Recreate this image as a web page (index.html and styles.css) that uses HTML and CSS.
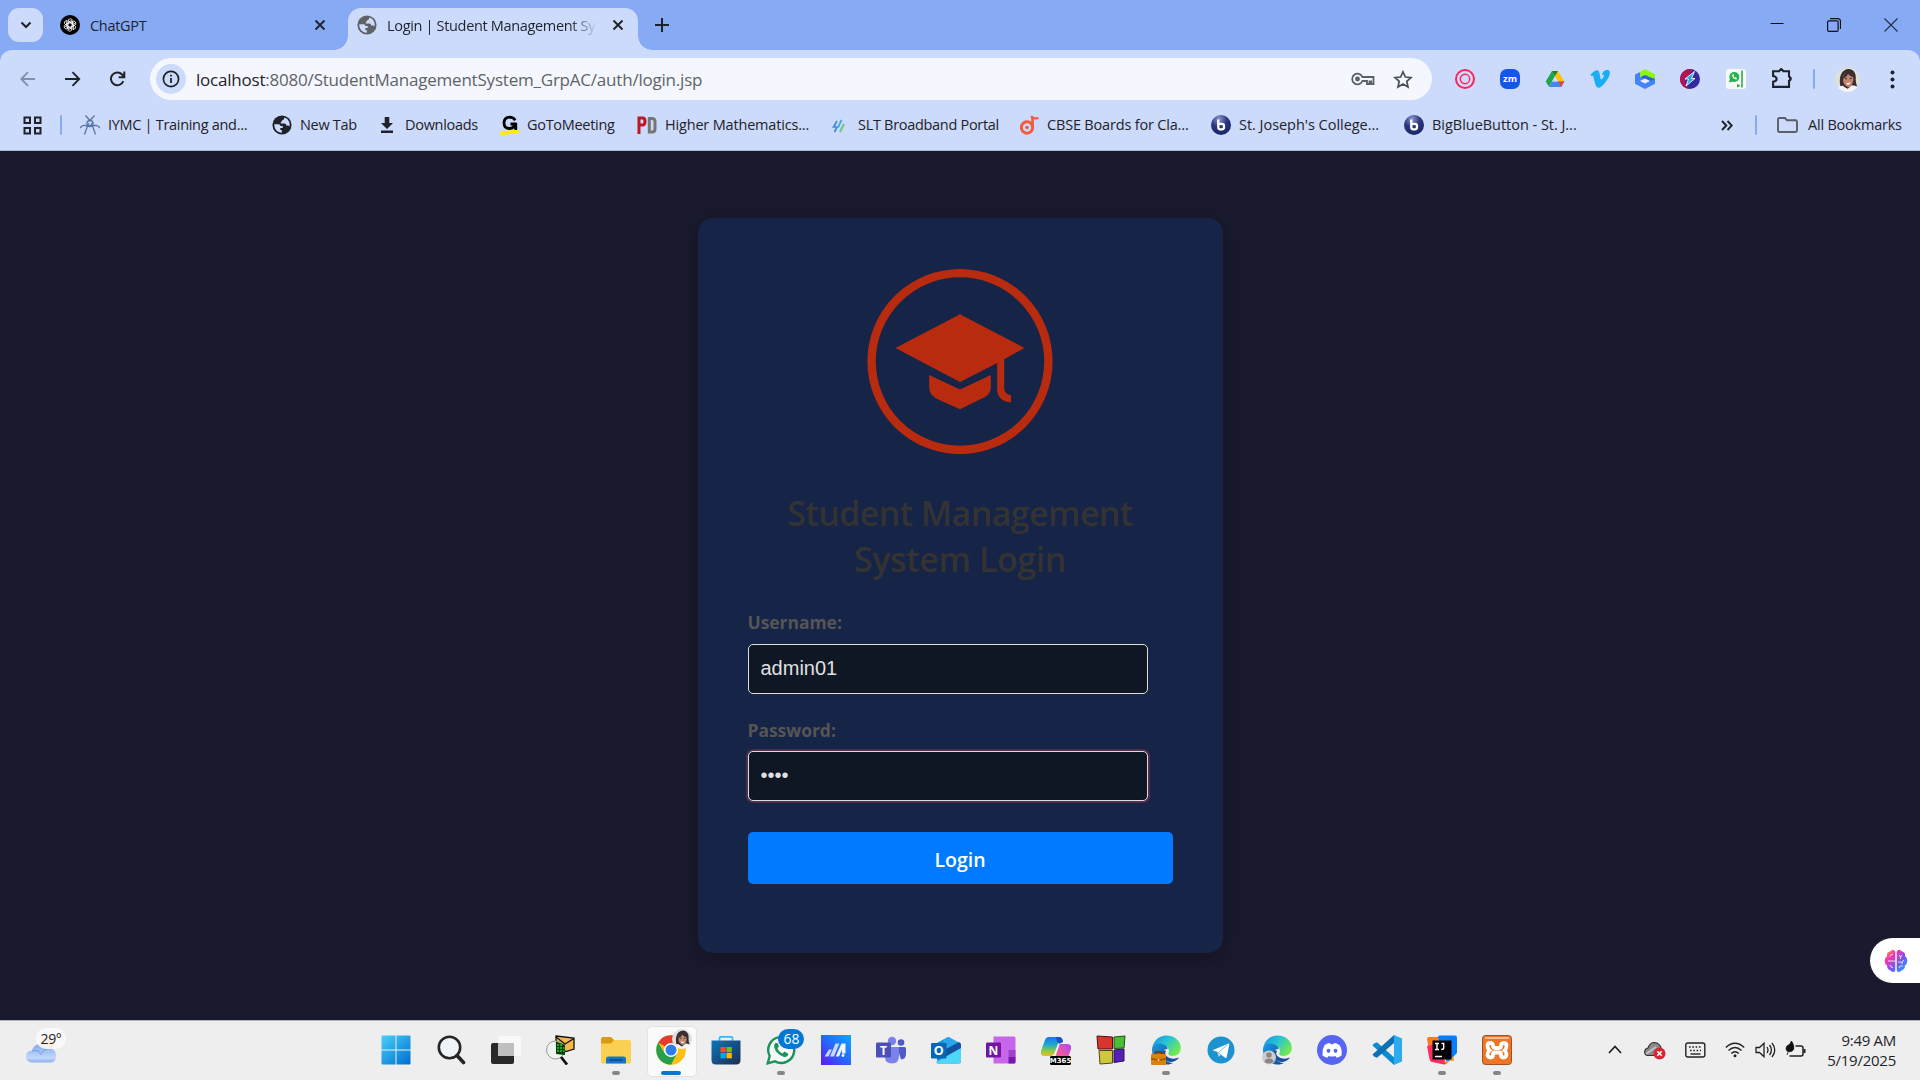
FILE: index.html
```html
<!DOCTYPE html>
<html lang="en">
<head>
<meta charset="utf-8">
<title>Login | Student Management System</title>
<link rel="stylesheet" href="styles.css">
</head>
<body>
<svg class="defs" width="0" height="0" aria-hidden="true">
  <defs>
    <linearGradient id="edgeA" x1="0" y1="0" x2="1" y2="0.6"><stop offset="0" stop-color="#1d8de0"/><stop offset=".5" stop-color="#27c3d6"/><stop offset="1" stop-color="#74ea4c"/></linearGradient>
    <linearGradient id="edgeB" x1="0" y1="0" x2="1" y2="1"><stop offset="0" stop-color="#1a9be8"/><stop offset="1" stop-color="#0b4a94"/></linearGradient>
    <radialGradient id="ball" cx=".4" cy=".2" r=".8"><stop offset="0" stop-color="#8e98cc"/><stop offset=".5" stop-color="#2b3780"/><stop offset="1" stop-color="#1b2564"/></radialGradient>
    <symbol id="globe" viewBox="0 0 20 20"><circle cx="10" cy="10" r="9.600" fill="currentColor"/><path d="M2.300 9.200h4.200c1.300 0 1.900.8 1.900 1.900h2.300v2H8.300v1.800h1.500v2.800C5.500 17.500 2 13.800 2.300 9.200z" fill="#ccdafb"/><path d="M12.200 2.500c.3 1.200-.2 2.300-1.600 2.500-.9.200-.5 2-1.800 2v1.600h3.600c1.300 0 1.800.9 1.800 1.900h1.500c.9 0 1.500.4 1.800 1 1-3.900-1.300-7.900-5.300-9z" fill="#ccdafb"/></symbol>
    <symbol id="x" viewBox="0 0 12 12"><path d="M1.500 1.500l9 9M10.500 1.500l-9 9" stroke="#1f2329" stroke-width="1.900"/></symbol>
    <symbol id="bbb" viewBox="0 0 20 20"><circle cx="10" cy="10" r="10" fill="url(#ball)"/><path d="M7.300 4.500v7.800q0 2 2 2h1.700q2 0 2-2v-1.500q0-2-2-2H7.500" fill="none" stroke="#fff" stroke-width="2.300"/></symbol>
    <symbol id="face" viewBox="0 0 26 26"><clipPath id="disc"><circle cx="13" cy="13" r="13"/></clipPath><g clip-path="url(#disc)"><path d="M0 0h26v26H0z" fill="#dbe2dc"/><path d="M6.500 22C4 16 4 3 14 2c6 0 8.500 6 7.500 11q0 4 1.500 7l-6 3z" fill="#3b2c30"/><path d="M8.500 9q3-4 8-2.500Q19.500 9 19 14q-1 6-5 7-4-1-5.500-6z" fill="#c0866e"/><path d="M8 12q1-5 6-7 4 1 5.500 6-4-1-6-4-1.500 4-5.500 5z" fill="#3b2c30"/><path d="M1 26q1-6 7-6.500l5 3.500 4.500-4Q25 19 26 26z" fill="#f8f2f3"/><path d="M11.500 16q2.500 1.500 4.500-.5-.7 3-2.300 3-1.500 0-2.200-2.500z" fill="#fff"/><path d="M10.300 12.200h2.200M15.200 12h2.200" stroke="#3b2c30"/></g></symbol>
    <symbol id="edge" viewBox="0 0 30 30"><path d="M1 16C1 7 7 .5 15.500.5 24 .5 29.800 6 29.800 13c0 5-4 8-8 8-3 0-5-1-4.500-2.500C19 16 17.500 11 12 9.500 6 8.200 2 11 1 16z" fill="url(#edgeA)"/><path d="M1 15C1.500 10 6 7.500 11 8.800c4 1 6 3.500 5.500 5.200C12 14 10.500 19 13 23c2 3.500 5 5 9 5-3 2-10 2.500-15-1.500C3 23.500.8 20 1 15z" fill="url(#edgeB)"/><path d="M11.500 17c-1 6 4 10.500 9 10 3-.3 6-2 7.500-4.500-4 2-10 1.500-13-2-1-1.300-1.200-3 0-4.500-1.500-.8-3-.5-3.500 1z" fill="#14509b"/></symbol>
  </defs>
</svg>

<div class="screen">
  <header class="browser">
    <div class="tabstrip">
      <button class="tab-search"><svg width="12" height="8" viewBox="0 0 12 8"><path d="M1.500 1.500L6 6l4.500-4.500" fill="none" stroke="#1f2329" stroke-width="2"/></svg></button>
      <div class="tab">
        <svg class="favicon" viewBox="0 0 20 20"><circle cx="10" cy="10" r="10" fill="#000"/><g fill="none" stroke="#fff" stroke-width=".8"><path id="petal" d="M8 9V6.300q0-2.300 2.100-2.500 1.300 0 2.300 1L8 7.300M12 11V8L7.800 5.700"/><use href="#petal" transform="rotate(60 10 10)"/><use href="#petal" transform="rotate(120 10 10)"/><use href="#petal" transform="rotate(180 10 10)"/><use href="#petal" transform="rotate(240 10 10)"/><use href="#petal" transform="rotate(300 10 10)"/></g></svg>
        <span class="tab-title">ChatGPT</span>
        <svg class="tab-close"><use href="#x"/></svg>
      </div>
      <div class="tab active">
        <svg class="favicon grey"><use href="#globe"/></svg>
        <span class="tab-title fade">Login | Student Management Sy</span>
        <svg class="tab-close"><use href="#x"/></svg>
      </div>
      <svg class="new-tab" width="14" height="14" viewBox="0 0 14 14"><path d="M7 0v14M0 7h14" stroke="#1f2329" stroke-width="2"/></svg>
      <div class="window-buttons">
        <svg width="14" height="14" viewBox="0 0 14 14"><path d="M.5 5.500h13" stroke="#111"/></svg>
        <svg width="14" height="14" viewBox="0 0 14 14" fill="none" stroke="#111"><rect x=".6" y="2.900" width="10.500" height="10.500" rx="1.200" stroke-width="1.200"/><path d="M3 .6h7.500q3 0 3 3V11" stroke-width="1.200"/></svg>
        <svg width="14" height="14" viewBox="0 0 14 14"><path d="M.5.5l13 13M13.500.5l-13 13" stroke="#222d45" stroke-width="1.100"/></svg>
      </div>
    </div>

    <div class="toolbar">
      <div class="nav">
        <svg width="16" height="16" viewBox="0 0 16 16" fill="none" stroke="#8390ad" stroke-width="1.900"><path d="M15 8H1M8 1.200L1.300 8 8 14.800"/></svg>
        <svg width="16" height="16" viewBox="0 0 16 16" fill="none" stroke="#1f2329" stroke-width="1.900"><path d="M0 8h14M7.500 1.200L14.200 8 7.500 14.800"/></svg>
        <svg width="16" height="16" viewBox="0.5 0 16 16" fill="none" stroke="#1f2329" stroke-width="2"><path d="M13.800 10.200A6.400 6.400 0 1 1 12.600 3.500L14.400 5.600M14.800.6v5.600H9.200"/></svg>
      </div>
      <div class="omnibox">
        <span class="site-info"><svg width="18" height="18" viewBox="0 0 18 18"><circle cx="9" cy="9" r="7.600" fill="none" stroke="#1f2329" stroke-width="1.700"/><path d="M9 8v5M9 4.800v1.800" stroke="#1f2329" stroke-width="1.800"/></svg></span>
        <span class="url">localhost<span class="path">:8080/StudentManagementSystem_GrpAC/auth/login.jsp</span></span>
        <svg class="key" width="24" height="14" viewBox="0 0 24 14" fill="none" stroke="#5b5f66" stroke-width="1.800"><path d="M11.400 5A5.300 5.300 0 1 0 11.400 9H16v3h2.500V9.500h1.700V12H22.500V5z"/><circle cx="6.500" cy="7" r="2.400" fill="#5b5f66" stroke="none"/></svg>
        <svg class="star" width="20" height="19" viewBox="0 0 20 19"><path d="M10 1.800l2.400 5.200 5.600.6-4.200 3.800 1.200 5.600L10 14.100 5 17l1.200-5.600L2 7.600 7.600 7z" fill="none" stroke="#4a4e55" stroke-width="1.700"/></svg>
      </div>
      <div class="extensions">
        <svg viewBox="0 0 20 20" fill="none" stroke="#ff2358"><circle cx="10" cy="10" r="9" stroke-width="2"/><circle cx="10" cy="10" r="4.700" stroke-width="1.400"/></svg>
        <svg viewBox="0 0 20 20"><rect width="20" height="20" rx="7" fill="#1257e8"/><text x="10" y="13" class="zm">zm</text></svg>
        <svg viewBox="0 0 20 20"><path d="M7 2h6L7 12.500 4 17.700.7 12.500z" fill="#20a452"/><path d="M7 2h6l6.300 10.500h-6.200z" fill="#ffc107"/><path d="M7 12.500h12.300L16.200 18H4z" fill="#4285f4"/><path d="M13 12.500h6.300L16.200 18z" fill="#ea4335"/><path d="M7 2h6l-3 5z" fill="#188038"/><path d="M10 7.500l2.800 5H7.100z" fill="#ccdafb"/></svg>
        <svg viewBox="0 0 20 20"><path d="M.5 5.500C3 3.300 5 1.500 6.500 1.300c2-.3 2.800 1.400 3.200 4 .5 3 .9 5.300 1.600 5.300.6 0 2-2 2.500-3.300.5-1.500-.6-2-1.900-1.400C12.600 2.500 15 .8 17.400 1c2 .1 2.600 1.600 2.400 3.800-.4 4-6 11.600-9.600 13.600-2.300 1.200-4.200-.3-5-3.300L3.500 8.200C3 6.400 2.400 6.500 1.500 7.200z" fill="#19aef4"/></svg>
        <svg viewBox="0 0 20 20"><path d="M5 3l5-3 10 5.200v5L10 6 5 8.500z" fill="#8bf80a"/><path d="M0 5.500L5 3v5.500L15 10l5-.5v5.300L10 20 0 14.800z" fill="#4285f8"/><path d="M5 8.300L10 6l10 4.300-5 1.700z" fill="#2865d0"/><path d="M5 12l5-2.500L15 12l-5 2.600z" fill="#e9f1ff"/></svg>
        <svg viewBox="0 0 20 20"><circle cx="10" cy="10" r="10" fill="#3428a4"/><path d="M13 .5A10 10 0 1 0 9 20L5 13z" fill="#b11455"/><path d="M14.500 2.500L5 10h3.500l-2.500 7L15 9.500h-3.500z" fill="#25a6ea" stroke="#fff" stroke-width=".9"/></svg>
        <svg viewBox="0 0 20 20"><rect width="20" height="20" rx="3" fill="#f7f8f8"/><circle cx="8.300" cy="8" r="5" fill="#24b34c"/><path d="M3 13.500l1-4 3 3z" fill="#24b34c"/><path d="M6 6q.5 4 4.500 4.500l.5-1.200-1.500-1-1 .5L7.500 7l.5-1-.8-1z" fill="#fff"/><path d="M16 1.500v17" stroke="#24a345" stroke-width="1.500"/><path d="M11 15l3.500 1.800L11 18.500z" fill="#24a345"/></svg>
        <svg class="puzzle" viewBox="0 0 21 21"><path d="M2 4h5.800a2.100 2.100 0 0 1 3.900 0H17.200v5a2.200 2.200 0 0 1 0 4.200V19H2v-5q3.400-.4 3.400-2.600T2 8.600z" fill="none" stroke="#1f2329" stroke-width="2"/><path d="M8 3.500q1.800-4 3.500 0M17.500 9q3.500 2 0 4" fill="#1f2329" stroke="#1f2329"/></svg>
      </div>
      <i class="divider"></i>
      <svg class="avatar"><use href="#face"/></svg>
      <svg class="menu" width="5" height="19" viewBox="0 0 5 19" fill="#1f2329"><circle cx="2.500" cy="2.500" r="2"/><circle cx="2.500" cy="9.500" r="2"/><circle cx="2.500" cy="16.500" r="2"/></svg>
    </div>

    <nav class="bookmarks">
      <svg class="apps" width="19" height="19" viewBox="0 0 19 19" fill="none" stroke="#1f2329" stroke-width="2"><path d="M1.500 1.500H7V7H1.500zM12 1.500h5.500V7H12zM1.500 12H7v5.500H1.500zM12 12h5.500v5.500H12z"/></svg>
      <i class="divider"></i>
      <div class="bookmark-list">
        <a><svg viewBox="0 0 20 20" fill="none" stroke="#5576a8" stroke-width="1.300"><path d="M5.500.5L10 5.500l4.500-5M8.500 8L4.500 19.500M11.500 8l4 11.500M0 13q2.500-3 5-2.500h10q2.500-.5 5 2.500"/><circle cx="10" cy="8.500" r="3"/></svg><span>IYMC | Training and...</span></a>
        <a><svg class="dark"><use href="#globe"/></svg><span>New Tab</span></a>
        <a><svg viewBox="0 0 20 20"><path d="M7.700 2h4.600v6H16l-6 6-6-6h3.700zM4 15.500h12V18H4z" fill="#1f2329"/></svg><span>Downloads</span></a>
        <a><svg viewBox="0 0 20 20"><path d="M1 16l19-1v3.500L1.500 20z" fill="#ffed00"/><path d="M16.200 5.200Q14.200 2.200 10.700 2.200 5 2.500 5 8t5.500 5.500Q15.500 13 16 9h-4.500M16.800 8v7" fill="none" stroke="#000" stroke-width="2.800"/></svg><span>GoToMeeting</span></a>
        <a class="looser"><svg viewBox="0 0 20 20" fill="none"><path d="M2 19V3h3.500Q8 3 8 6.500T5.500 10H2" stroke="#bd1722" stroke-width="3"/><path d="M12.300 3.500H15q3 0 3 3v7.500q0 3-3 3h-2.700z" stroke="#757575" stroke-width="3"/></svg><span>Higher Mathematics...</span></a>
        <a><svg viewBox="0 0 20 20" fill="none"><path d="M7 6l-3.500 6H7l-2.500 5" stroke="#3c8ed0" stroke-width="1.700"/><path d="M11.500 5L8 12.500" stroke="#4ba8da" stroke-width="1.800"/><path d="M14 9l-4 8" stroke="#72c47e" stroke-width="2"/><path d="M16 3l-1 2M3 16l-2 2M18 12l-1 2" stroke="#bfe8f8" stroke-width="1.200"/></svg><span>SLT Broadband Portal</span></a>
        <a class="looser"><svg viewBox="0 0 20 20" fill="none" stroke="#f25c3a"><circle cx="8" cy="12.500" r="5.700" stroke-width="3"/><path d="M13.500 14V2" stroke-width="2.700"/><path d="M12.200 1q2 3.500 7.300 2" stroke-width="2.300"/><circle cx="8" cy="12.500" r="1.800" fill="#f25c3a" stroke="none"/></svg><span>CBSE Boards for Cla...</span></a>
        <a class="loosest"><svg><use href="#bbb"/></svg><span>St. Joseph's College...</span></a>
        <a class="loosest"><svg><use href="#bbb"/></svg><span>BigBlueButton - St. J...</span></a>
      </div>
      <svg class="more" width="12" height="11" viewBox="0 0 12 11" fill="none" stroke="#1f2329" stroke-width="1.900"><path d="M1 1l4.300 4.500L1 10M6.500 1l4.300 4.500L6.500 10"/></svg>
      <i class="divider"></i>
      <svg class="folder" width="21" height="16" viewBox="0 0 21 16"><path d="M1 2.500Q1 1 2.500 1H8l2 2.200h8.500q1.500 0 1.500 1.500v8.800q0 1.500-1.500 1.500h-16Q1 15 1 13.500z" fill="none" stroke="#5b5f66" stroke-width="1.900"/></svg>
      <span class="all">All Bookmarks</span>
    </nav>
  </header>

  <main class="page">
    <form class="card">
      <svg class="logo" width="186" height="186" viewBox="867 268 186 186" fill="#b92b0e">
        <circle cx="960" cy="361.500" r="88.400" fill="none" stroke="#b92b0e" stroke-width="8.400"/>
        <path d="M960 314.200L1024.500 348 1004.200 359.200V388Q1004.500 394.500 1011 395.200V402.300Q998 401.500 997.200 390V363L960 382 895.500 348z"/>
        <path d="M929.200 375L960 389.500 990.800 375V388Q990.500 393.500 985 397L960 409.200 936.500 398.800Q929.200 394.500 929.200 387z"/>
      </svg>
      <h2>Student Management<br><span class="second">System Login</span></h2>
      <label for="username">Username:</label>
      <input id="username" type="text" value="admin01">
      <label for="password">Password:</label>
      <input id="password" class="focused" type="password" value="1234">
      <button type="button" class="login"><span>Login</span></button>
    </form>
    <aside class="assistant"><svg width="24" height="24" viewBox="0 0 24 24"><defs><linearGradient id="brain" x1="0" y1="0" x2="1" y2="1"><stop offset="0" stop-color="#ffb020"/><stop offset=".3" stop-color="#f036b4"/><stop offset=".6" stop-color="#7358f0"/><stop offset="1" stop-color="#18b5f4"/></linearGradient></defs><path d="M11.300 2.500Q9-.8 6 2.500 2.500 3 3 7 .2 9 .8 12.500 1 15.500 3 16.500q0 4 3.500 5 3 3 4.800 0zM12.700 2.500Q15-.8 18 2.500 21.500 3 21 7q2.800 2 2.200 5.500-.2 3-2.200 4 0 4-3.500 5-3 3-4.800 0z" fill="url(#brain)"/><path d="M4 12h7M6 7.500Q7 5 9 5.500M6 16q1 3 3 2.500M15 6l1.500 2L18 6M16.500 8v2M14 13h4l2-2M18 13v2M15 19q0-2 2-2h2" fill="none" stroke="#fff" stroke-width=".8"/></svg></aside>
  </main>

  <footer class="taskbar">
    <div class="weather">
      <svg width="32" height="34" viewBox="0 0 32 34"><defs><linearGradient id="cloud" x1="0" y1="0" x2="0" y2="1"><stop offset="0" stop-color="#7fa9ed"/><stop offset=".75" stop-color="#c3d8f9"/><stop offset="1" stop-color="#8db0ee"/></linearGradient></defs><circle cx="22" cy="15" r="7" fill="#fb8a23"/><path d="M7 33.500Q1 33 1 27.500 1 22 7 21.500 9 15 15 15t8 4.500q8-.5 8 7t-6 7z" fill="url(#cloud)"/><path d="M7 22q7-2 9 4M17 24q2-4 6-4.500" fill="none" stroke="#7399dc"/></svg>
      <span class="temp">29°</span>
    </div>

    <div class="apps-row">
      <div><svg viewBox="0 0 30 30"><defs><linearGradient id="win" gradientUnits="userSpaceOnUse" x1="0" y1="0" x2="26" y2="30"><stop offset="0" stop-color="#4bd2fb"/><stop offset="1" stop-color="#0072d2"/></linearGradient></defs><path d="M.5 1.500q0-1 1-1H14.500V14.500H.5zM15.500.5h13q1 0 1 1v13h-14zM.5 15.500h14v14h-13q-1 0-1-1zM15.500 15.500h14v13q0 1-1 1h-13z" fill="url(#win)"/></svg></div>
      <div><svg viewBox="0 0 30 30" fill="none" stroke="#252525"><circle cx="13.500" cy="12.500" r="10.700" fill="#f1f4f6" stroke-width="2.600"/><path d="M21 20.500l6.500 7" stroke-width="3.600" stroke-linecap="round"/></svg></div>
      <div><svg viewBox="0 0 30 30"><rect x="0" y="8" width="23" height="21" rx="2" fill="#292929"/><path d="M7 2.500Q7 1 9 1h19q2 0 2 2v16q0 2-2 2H7z" fill="#f8f8f8"/><path d="M7 8h16v13H7z" fill="#bfbfbf"/></svg></div>
      <div><svg viewBox="0 0 30 30"><path d="M10 1l18 2v11l-8 2.500-10-5z" fill="#f0b94a" stroke="#111" stroke-width="1.300"/><path d="M10 2l9 7 9-5.500" fill="none" stroke="#111" stroke-width="1.300"/><circle cx="9.500" cy="15" r="9" fill="#eff3ef" fill-opacity=".85" stroke="#999"/><path d="M10 6.500l9 3.500v10l-9-1z" fill="#0a3b09"/><path d="M11 10h2m1 0h2m-5 3h2m1 0h2m1 0h1.500m-7.500 3h2m1 0h2m1 0h1.500" stroke="#1ed02d" stroke-width="1.500"/><path d="M15 22l6 7.500" stroke="#111" stroke-width="2.800"/></svg></div>
      <div class="running"><svg viewBox="0 0 30 30"><path d="M0 4q0-2 2-2h8l3 3v6H0z" fill="#d99b13"/><path d="M0 8.500h10L13 5h15q2 0 2 2v20q0 1.500-1.500 1.500h-27Q0 28.500 0 27z" fill="#fbd052"/><path d="M5 28v-4q0-2.500 2.500-2.500h15Q25 21.500 25 24v4.500H5z" fill="#1675c4"/><path d="M9 25h12" stroke="#0a4784" stroke-width="1.500" stroke-linecap="round"/></svg></div>
      <div class="running current"><svg viewBox="0 0 30 30"><circle cx="15" cy="15" r="14.800" fill="#fbc116"/><path d="M15 15L2.200 7.600A14.800 14.800 0 0 1 28 8z" fill="#e33b2e"/><path d="M2.200 7.600A14.800 14.800 0 0 0 15 29.800L21 18.500 8.500 18z" fill="#279e4b"/><path d="M15 8.300h12.800L28 8z" fill="#e33b2e"/><circle cx="15" cy="15" r="7" fill="#fff"/><circle cx="15" cy="15" r="5.500" fill="#2e7dee"/></svg><svg class="profile"><use href="#face"/></svg></div>
      <div><svg viewBox="0 0 30 30"><defs><linearGradient id="store" x1="0" y1="0" x2="1" y2="1"><stop offset="0" stop-color="#0c76b8"/><stop offset="1" stop-color="#1d2c52"/></linearGradient></defs><path d="M8.500 6V3q0-1.200 1.200-1.200h10.600q1.200 0 1.200 1.200v3" fill="none" stroke="#2fbdf0" stroke-width="1.700"/><path d="M.5 5.500h29V25q0 4.500-4.500 4.500H5Q.5 29.500.5 25z" fill="url(#store)"/><path d="M9.500 12h5.300v5.300H9.500z" fill="#f25022"/><path d="M15.500 12h5.300v5.300h-5.300z" fill="#7fba00"/><path d="M9.500 18h5.300v5.300H9.500z" fill="#00a4ef"/><path d="M15.500 18h5.300v5.300h-5.300z" fill="#ffb900"/></svg></div>
      <div class="running"><svg viewBox="0 0 30 30"><path d="M1.700 28.300l2-7.300A13 13 0 1 1 9 26.400z" fill="#f5f8f6" stroke="#19935a" stroke-width="2.400"/><path d="M9.500 8q-2 1.500-1.300 4.500 2.300 7 9.800 9.500 3.500.3 4.500-3l-4-2.500-2 2q-4-2-5-5.500l1.500-1.500L11.500 8z" fill="#19935a"/></svg><b class="badge">68</b></div>
      <div><svg viewBox="0 0 30 30"><defs><linearGradient id="asus" x1="0" y1="1" x2="1" y2="0"><stop offset="0" stop-color="#6018ee"/><stop offset=".5" stop-color="#2468ff"/><stop offset="1" stop-color="#08aaff"/></linearGradient></defs><path d="M0 0h30v30H0z" fill="url(#asus)"/><path d="M3.500 21.500L8 14.500h3L7.500 21.500zM9 21.500L14.500 8.500h3.800L13 21.500z" fill="#c9d8ff"/><path d="M14.800 21.500L20.500 8.500H24.500V18.500H21V14.500L18 21.500z" fill="#f0f5ff"/><circle cx="22" cy="20.500" r="1.400" fill="#fff"/></svg></div>
      <div><svg viewBox="0 0 30 30"><circle cx="16" cy="6" r="4.200" fill="#7b83eb"/><circle cx="25" cy="7.500" r="3.300" fill="#5059c9"/><path d="M21 12h7.500q1.500 0 1.500 1.500V19q0 5-5 5.500z" fill="#5059c9"/><path d="M9 12h14v9q0 7.500-7 7.500T9 22z" fill="#7b83eb"/><rect y="7.500" width="15" height="15" rx="1.200" fill="#4a50b5"/><text x="7.500" y="19.500" class="tile-letter t">T</text></svg></div>
      <div><svg viewBox="0 0 30 30"><path d="M4 9L17 2l13 7v17q0 2.500-2.500 2.500h-21z" fill="#1390df"/><path d="M12 5l6-3 12 7-13 8z" fill="#28a8ea"/><path d="M15 14L28 7l2 2v6l-16 9z" fill="#1054a0"/><path d="M5 27l25-14v13q0 2.500-2.500 2.500H8q-3 0-3-1.500z" fill="#4fd6f8"/><rect y="8" width="15.500" height="15.500" rx="1.200" fill="#0766b5"/><text x="7.700" y="20" class="tile-letter">O</text></svg></div>
      <div><svg viewBox="0 0 30 30"><path d="M7.500 1.500H28q1.500 0 1.500 1.500v24q0 1.500-1.500 1.500H7.500z" fill="#c766ea"/><path d="M22.500 15h7v7h-7z" fill="#9e42c8"/><path d="M22.500 22h7v5q0 1.500-1.500 1.500h-5.500z" fill="#7719aa"/><rect y="7.500" width="15" height="15" rx="1.200" fill="#7215a2"/><text x="7.500" y="19.500" class="tile-letter t">N</text></svg></div>
      <div><svg viewBox="0 0 30 30"><defs><linearGradient id="copA" x1="0" y1="0" x2="0" y2="1"><stop offset="0" stop-color="#1577ec"/><stop offset=".4" stop-color="#21a9cc"/><stop offset=".75" stop-color="#96cc3a"/><stop offset="1" stop-color="#f0b72b"/></linearGradient><linearGradient id="copB" x1="1" y1="0" x2="0" y2="1"><stop offset="0" stop-color="#a54af0"/><stop offset=".5" stop-color="#ef58a6"/><stop offset="1" stop-color="#ff8a4a"/></linearGradient></defs><path d="M8 2h10q3 0 4 4l-4 3-5 10q-2 3-5 2H3q-4 0-3-5L4 5q1-3 4-3z" fill="url(#copA)"/><path d="M18 9h8q5 0 4 5l-4 12q-1 2-4 2H10q2-1 3-4l4-13q.5-2 1-2z" fill="url(#copB)"/><path d="M15 2h3q3 0 4 5l-4 2q-3-3-3-7z" fill="#1753c7"/><path d="M18 8.500l-5 14" stroke="#f5f5f8" stroke-width="1.800"/><rect x="9" y="21" width="21" height="9" rx="1.500" fill="#000"/><text x="19.500" y="28.300" class="m365">M365</text></svg></div>
      <div><svg viewBox="0 0 30 30"><path d="M1 1l15.500 1V14H2z" fill="#d8352d" stroke="#4d1010"/><path d="M18 2L29 1l-1 12-10 .5z" fill="#4cbd34" stroke="#1f5017"/><path d="M3 15.500h13.500V28L4 29z" fill="#cfc83c" stroke="#4d4910"/><path d="M18 15l10-1v12l-10 1.500z" fill="#5420b4" stroke="#281056"/></svg></div>
      <div class="running"><svg viewBox="0 0 30 30"><use href="#edge" width="30" height="30"/><path d="M4.500 19v-2h6v2" fill="none" stroke="#6c3c06" stroke-width="1.300"/><rect y="19" width="15" height="11" rx="1" fill="#d9820e"/><path d="M0 23.500q7 3 15 0" fill="none" stroke="#9b5407" stroke-width="1.500"/><circle cx="7.500" cy="25" r="1" fill="#ffe86a"/></svg></div>
      <div><svg viewBox="0 0 30 30"><circle cx="15" cy="15" r="13.500" fill="#1c93cf"/><path d="M6.500 15.300L22.500 8.500q1-.2.800 1l-2.600 12.800q-.4 1-1.500.4L11 16.800z" fill="#fff"/><path d="M11.500 17l1 5 2.500-2.500" fill="#c8daea"/><path d="M12 18l9-8" stroke="#80b6d8"/></svg></div>
      <div><svg viewBox="0 0 30 30"><use href="#edge" width="30" height="30"/><circle cx="7" cy="22.500" r="7" fill="#cfcecd"/><circle cx="7" cy="20" r="2.800" fill="#8a8886"/><path d="M2.500 27q0-3.500 4.500-3.500t4.500 3.500q-4 3-9 0z" fill="#8a8886"/></svg></div>
      <div><svg viewBox="0 0 30 30"><circle cx="15" cy="15" r="15" fill="#5865f2"/><path d="M10.500 8.500L13 8l.7 1.300h2.600L17 8l2.500.5 3 1.500q3 5 2 10.500-2.500 2-5 2.300l-1-1.800q-3.500 1-7 0l-1 1.800q-2.500-.3-5-2.300-.7-5.500 2-10.500z" fill="#fff"/><ellipse cx="11.500" cy="15.800" rx="1.900" ry="2.100" fill="#5865f2"/><ellipse cx="18.500" cy="15.800" rx="1.900" ry="2.100" fill="#5865f2"/></svg></div>
      <div><svg viewBox="0 0 30 30"><path d="M2 8.500l3-1.300 17 15V30L.5 10.500z" fill="#0b8bd0"/><path d="M2 21.500l3 1.300L22 8V0L.5 19.500z" fill="#0872b5"/><path d="M22 0l8 3.500v23L22 30z" fill="#2eaaf0"/></svg></div>
      <div class="running"><svg viewBox="0 0 30 30"><path d="M0 4q0-2 2-2h12v17L3 20z" fill="#fb7a23"/><path d="M0 11l8-2 12 20-3 .500L5 27q-2-.5-2.500-2.500z" fill="#fd2f62"/><path d="M11 2q0-1.500 1.500-1.500H28q2 0 2 2V18L20 28z" fill="#087cfa"/><path d="M17 26h10v-5l-8 8z" fill="#fca02d"/><path d="M5.500 5.500h19v19h-19z" fill="#000"/><path d="M8 8.500h4M10 8.500v6M8 14.500h4M14.500 8.500h2.200V13q0 1.500-2.500 1.500" fill="none" stroke="#fff" stroke-width="1.400"/><path d="M8 21.500h7" stroke="#fff" stroke-width="1.500"/></svg></div>
      <div class="running"><svg viewBox="0 0 30 30"><rect x=".5" y=".5" width="29" height="29" rx="3" fill="#ef7524" stroke="#9b5325"/><path d="M3 2h24v2H3z" fill="#f9b98c"/><path d="M13 13h4q2 0 2-2.500Q19.500 8 22 8t2.500 3Q24.500 14 22.500 15.500q2 1.500 2 4-.5 3-3 3T19 20q0-2.500-2-2.500h-4q-2 0-2 2.500 0 2.500-2.500 2.500t-3-3q0-2.500 2-4-2-1.500-2-4.500Q5.500 8 8 8t3 2.500q0 2.500 2 2.500z" fill="none" stroke="#fff" stroke-width="3.800"/></svg></div>
    </div>

    <div class="tray">
      <svg width="14" height="9" viewBox="0 0 14 9"><path d="M1 8l6-6.500L13 8" fill="none" stroke="#1b1b1b" stroke-width="1.600"/></svg>
      <svg width="22" height="20" viewBox="0 0 22 20"><path d="M4 15.500Q.5 15 .7 11.500 1 8.500 4 8 6 2.500 10.500 2.500 15.500 3 17 8l-6 7.500z" fill="#8b8b8b" stroke="#333" stroke-width="1.200"/><path d="M2 14l10-7" stroke="#c2c2c2" stroke-width="2"/><circle cx="15.500" cy="13.500" r="6" fill="#d92532"/><path d="M13.300 11.300l4.400 4.400M17.700 11.300l-4.400 4.400" stroke="#fff" stroke-width="1.600"/></svg>
      <svg width="21" height="16" viewBox="0 0 21 16" fill="none" stroke="#222"><rect x=".8" y="1" width="19" height="14" rx="2" stroke-width="1.400"/><path d="M4 5h13M5 8.500h11" stroke-width="1.600" stroke-dasharray="1.600 1.700"/><path d="M5.500 12h10" stroke-width="1.400"/></svg>
      <div class="status">
        <svg width="20" height="16" viewBox="0 0 20 16" fill="none" stroke="#222" stroke-width="1.400"><path d="M.8 5.500Q10-3 19.200 5.500M3.500 8.600Q10 2.500 16.500 8.600M6.200 11.500Q10 8 13.800 11.500"/><circle cx="10" cy="13.700" r="1.500" fill="#222" stroke="none"/></svg>
        <svg width="21" height="18" viewBox="0 0 21 18" fill="none" stroke="#222" stroke-width="1.300"><path d="M1 6.500h3.500L9 2.200v13.600L4.500 11.500H1zM12 6q2 3 0 6M14.500 4q3.800 5 0 10M17 2q5.500 7 0 14"/></svg>
        <svg width="21" height="18" viewBox="0 0 21 18"><path d="M10.500 5H16q2 0 2 2v6q0 2-2 2H4.500" fill="none" stroke="#222" stroke-width="1.500"/><path d="M18.500 8h2v4h-2z" fill="#222"/><path d="M6.500 0q3 4.500 2.200 8-1 2.700-4.200 2.700Q1 10.500 1 7.500 1.300 4.500 4 3.800 5.500 2.500 6.500 0zM3.500 10l-1.500 4" fill="#111" stroke="#111" stroke-width=".8"/></svg>
      </div>
      <div class="clock"><span class="time">9:49 AM</span><span class="date">5/19/2025</span></div>
    </div>
  </footer>
</div>
</body>
</html>
```

FILE: styles.css
```css
* { box-sizing: border-box; }
body { margin: 0; font-family: "Open Sans", "Noto Sans", sans-serif; color: #1f2329; }
svg { display: block; flex: none; }
button, input { font: inherit; margin: 0; }
.defs { position: absolute; }

.screen { width: 1920px; height: 1080px; display: flex; flex-direction: column; overflow: hidden; }

/* Browser chrome */
.browser { height: 151px; flex: none; background: #87aaf5; border-bottom: 1px solid #a9b8d8; font-size: 14.5px; }
.tabstrip { height: 50px; display: flex; align-items: center; padding: 8px 22px 0 8px; }
.tab-search { width: 35px; height: 34px; margin-bottom: 8px; border: 0; border-radius: 11px; background: #ccdafb; display: flex; align-items: center; justify-content: center; padding: 0; }
.tab { width: 290px; height: 42px; display: flex; align-items: center; padding: 0 14px 8px 10px; margin-left: 7px; }
.tab.active { margin-left: 8px; padding-left: 9px; background: #ccdafb; border-radius: 13px 13px 0 0; position: relative; }
.tab.active::before, .tab.active::after { content: ""; position: absolute; bottom: 0; width: 14px; height: 14px; }
.tab.active::before { left: -14px; background: radial-gradient(circle at 0 0, transparent 13.5px, #ccdafb 14px); }
.tab.active::after { right: -14px; background: radial-gradient(circle at 100% 0, transparent 13.5px, #ccdafb 14px); }
.favicon { width: 20px; height: 20px; }
.grey { color: #5f6368; }
.dark { color: #1f2329; }
.tab-title { flex: 1; margin-left: 10px; margin-right: 10px; white-space: nowrap; letter-spacing: -0.3px; }
.tab-title.fade { letter-spacing: -0.33px; -webkit-mask-image: linear-gradient(to right, #000 85%, transparent 98%); mask-image: linear-gradient(to right, #000 85%, transparent 98%); }
.tab-close { width: 12px; height: 12px; }
.new-tab { margin: 0 0 8px 17px; }
.window-buttons { margin-left: auto; margin-bottom: 9px; display: flex; gap: 43px; }

.toolbar { height: 50px; display: flex; align-items: center; padding: 8px 25px 0 20px; background: #ccdafb; border-radius: 12px 12px 0 0; }
.nav { width: 130px; display: flex; gap: 29px; margin-bottom: 1px; }
.omnibox { width: 1282px; height: 42px; border-radius: 21px; background: #f4f7fe; display: flex; align-items: center; padding: 0 19px 0 6px; }
.site-info { width: 30px; height: 30px; border-radius: 15px; background: #ccdafb; display: flex; align-items: center; justify-content: center; }
.url { margin-left: 10px; font-size: 17px; letter-spacing: -0.21px; white-space: nowrap; flex: 1; }
.path { color: #5f6368; }
.star { margin-left: 18px; }
.extensions { display: flex; gap: 25.100px; margin-left: 23px; }
.extensions svg { width: 20px; height: 20px; }
.extensions .puzzle { width: 22px; height: 22px; margin-top: -2px; }
.zm { font: bold 9.500px "Open Sans", sans-serif; fill: #fff; text-anchor: middle; }
.divider { width: 2px; height: 20px; border-radius: 1px; background: #87aaf5; flex: none; }
.toolbar .divider { margin-left: 20px; }
.avatar { width: 25px; height: 25px; margin-left: 20px; }
.menu { margin-left: auto; }

.bookmarks { height: 50px; display: flex; align-items: center; background: #ccdafb; padding: 0 17px 0 23px; font-size: 14.500px; letter-spacing: -0.3px; }
.bookmarks .apps { margin-right: 18px; }
.bookmark-list { margin-left: 18px; display: grid; grid-template-columns: 192px 105px 122px 138px 193px 189px 192px 193px 190px; }
.bookmark-list a { display: flex; align-items: center; gap: 8px; white-space: nowrap; }
.bookmark-list span, .all { padding-bottom: 2px; }
.bookmark-list svg { width: 20px; height: 20px; }
.looser { letter-spacing: -0.18px; }
.loosest { letter-spacing: -0.03px; }
.more { margin-left: auto; margin-right: 22px; }
.folder { margin-left: 20px; }
.all { margin-left: 10px; width: 95px; white-space: nowrap; letter-spacing: -0.22px; }

/* Login page */
.page { flex: 1; background: #1a1a2e; padding-top: 67px; position: relative; }
.card { width: 525px; height: 735px; margin: 0 auto; padding: 50px; display: flex; flex-direction: column; border-radius: 15px; background: #162447; box-shadow: 0 5px 19px rgba(0, 0, 0, .3); }
.logo { align-self: center; }
.card h2 { margin: 36px -10px 0; text-align: center; font-size: 34px; line-height: 46px; font-weight: 600; color: #333; letter-spacing: -0.6px; }
.second { letter-spacing: -0.4px; }
.card label { height: 29px; font-size: 17.500px; line-height: 29px; font-weight: 700; color: #555; letter-spacing: -0.050px; margin-top: 26px; margin-bottom: 7px; }
.card input + label { margin-top: 22px; margin-bottom: 6px; }
.card input { width: 400px; height: 50px; padding: 0 12px 1px; border: 1px solid #ddd; border-radius: 5px; background: #0f1624; color: #e0e0e0; font-family: "Liberation Sans", Arial, sans-serif; font-size: 20px; outline: none; }
.card input.focused { box-shadow: 0 0 0 2px #532d4f; }
.login { width: 425px; height: 52px; margin-top: 31px; border: 0; border-radius: 5px; background: #007bff; color: #fff; font-size: 19.500px; font-weight: 600; padding: 2px 0 0; }
.assistant { position: absolute; right: 0; top: 787px; width: 50px; height: 45px; border-radius: 23px 0 0 23px; background: #fff; display: flex; align-items: center; padding-left: 14px; }

/* Taskbar */
.taskbar { height: 60px; flex: none; background: #eee; border-top: 1px solid #b5b2bb; display: flex; align-items: center; }
.weather { width: 368px; height: 59px; padding: 8px 0 0 25px; position: relative; }
.temp { position: absolute; left: 36px; top: 7px; width: 30px; height: 21px; border-radius: 10px; background: rgba(250, 250, 250, .88); font-size: 14px; line-height: 21px; text-align: center; letter-spacing: -0.3px; }
.apps-row { display: grid; grid-template-columns: repeat(21, 55.070px); }
.apps-row > div { height: 59px; width: 55px; position: relative; display: flex; align-items: center; justify-content: center; padding-bottom: 1px; }
.apps-row > div > svg { width: 30px; height: 30px; }
.running::after { content: ""; position: absolute; left: 23.500px; bottom: 5px; width: 8px; height: 4px; border-radius: 2px; background: #868686; }
.current::before { content: ""; position: absolute; left: 3.500px; top: 5px; width: 48px; height: 49px; border-radius: 5px; background: #fafafa; border: 1px solid #e2e2e2; }
.current > svg { position: relative; }
.current::after { left: 17.500px; width: 20px; background: #0078d4; }
.apps-row .current .profile { position: absolute; width: 20px; height: 20px; right: 6px; top: 8px; }
.badge { position: absolute; left: 25px; top: 8px; width: 26px; height: 20px; border-radius: 10px; background: #0078d4; color: #fff; font-size: 14px; line-height: 20px; font-weight: 400; text-align: center; }
.tile-letter { font: bold 12.500px "Open Sans", sans-serif; fill: #fff; text-anchor: middle; }
.t { font-size: 12px; }
.m365 { font: bold 7px "DejaVu Sans", sans-serif; fill: #fff; text-anchor: middle; }
.tray { margin-left: auto; padding: 0 24px 2px 0; display: flex; align-items: center; }
.tray > svg:nth-child(2) { margin-left: 22px; }
.tray > svg:nth-child(3) { margin-left: 19px; }
.status { display: flex; align-items: center; gap: 9.500px; margin-left: 19px; }
.clock { width: 90px; display: flex; flex-direction: column; align-items: flex-end; font-size: 15px; line-height: 20px; letter-spacing: -0.250px; }
.time { letter-spacing: -0.3px; }
```
